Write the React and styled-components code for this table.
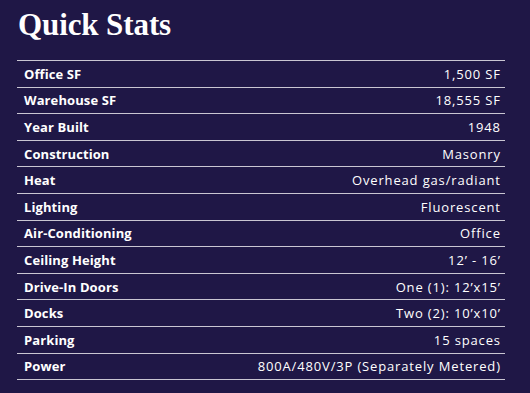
import React from "react";
import styled, { createGlobalStyle } from "styled-components";

const stats = [
  ["Office SF", "1,500 SF"],
  ["Warehouse SF", "18,555 SF"],
  ["Year Built", "1948"],
  ["Construction", "Masonry"],
  ["Heat", "Overhead gas/radiant"],
  ["Lighting", "Fluorescent"],
  ["Air-Conditioning", "Office"],
  ["Ceiling Height", "12’ - 16’"],
  ["Drive-In Doors", "One (1): 12’x15’"],
  ["Docks", "Two (2): 10’x10’"],
  ["Parking", "15 spaces"],
  ["Power", "800A/480V/3P (Separately Metered)"],
];

const GlobalStyle = createGlobalStyle`
  html, body {
    margin: 0;
    padding: 0;
    background: #1f1746;
  }
`;

const Panel = styled.div`
  width: 530px;
  height: 393px;
  box-sizing: border-box;
  padding: 7px 25px 0 17px;
  background: #1f1746;
  color: #ffffff;
`;

const Title = styled.h2`
  margin: 0 0 0 1px;
  font-family: "Liberation Serif", Georgia, serif;
  font-weight: 700;
  font-size: 31px;
  line-height: 36px;
  letter-spacing: -0.1px;
`;

const Table = styled.div`
  margin-top: 17px;
  border-top: 1px solid #c9c6d2;
`;

const Row = styled.div`
  display: flex;
  justify-content: space-between;
  align-items: center;
  height: 25.6px;
  padding: 0 5px 0 7px;
  border-bottom: 1px solid #c9c6d2;
  font-family: "Open Sans", "Liberation Sans", sans-serif;
  font-size: 13px;
`;

const Label = styled.span`
  font-weight: 700;
  letter-spacing: 0.1px;
`;

const Value = styled.span`
  font-weight: 400;
  letter-spacing: 0.85px;
  margin-right: -0.85px;
`;

export default function App() {
  return (
    <Panel>
      <GlobalStyle />
      <Title>Quick Stats</Title>
      <Table>
        {stats.map(([label, value]) => (
          <Row key={label}>
            <Label>{label}</Label>
            <Value>{value}</Value>
          </Row>
        ))}
      </Table>
    </Panel>
  );
}
